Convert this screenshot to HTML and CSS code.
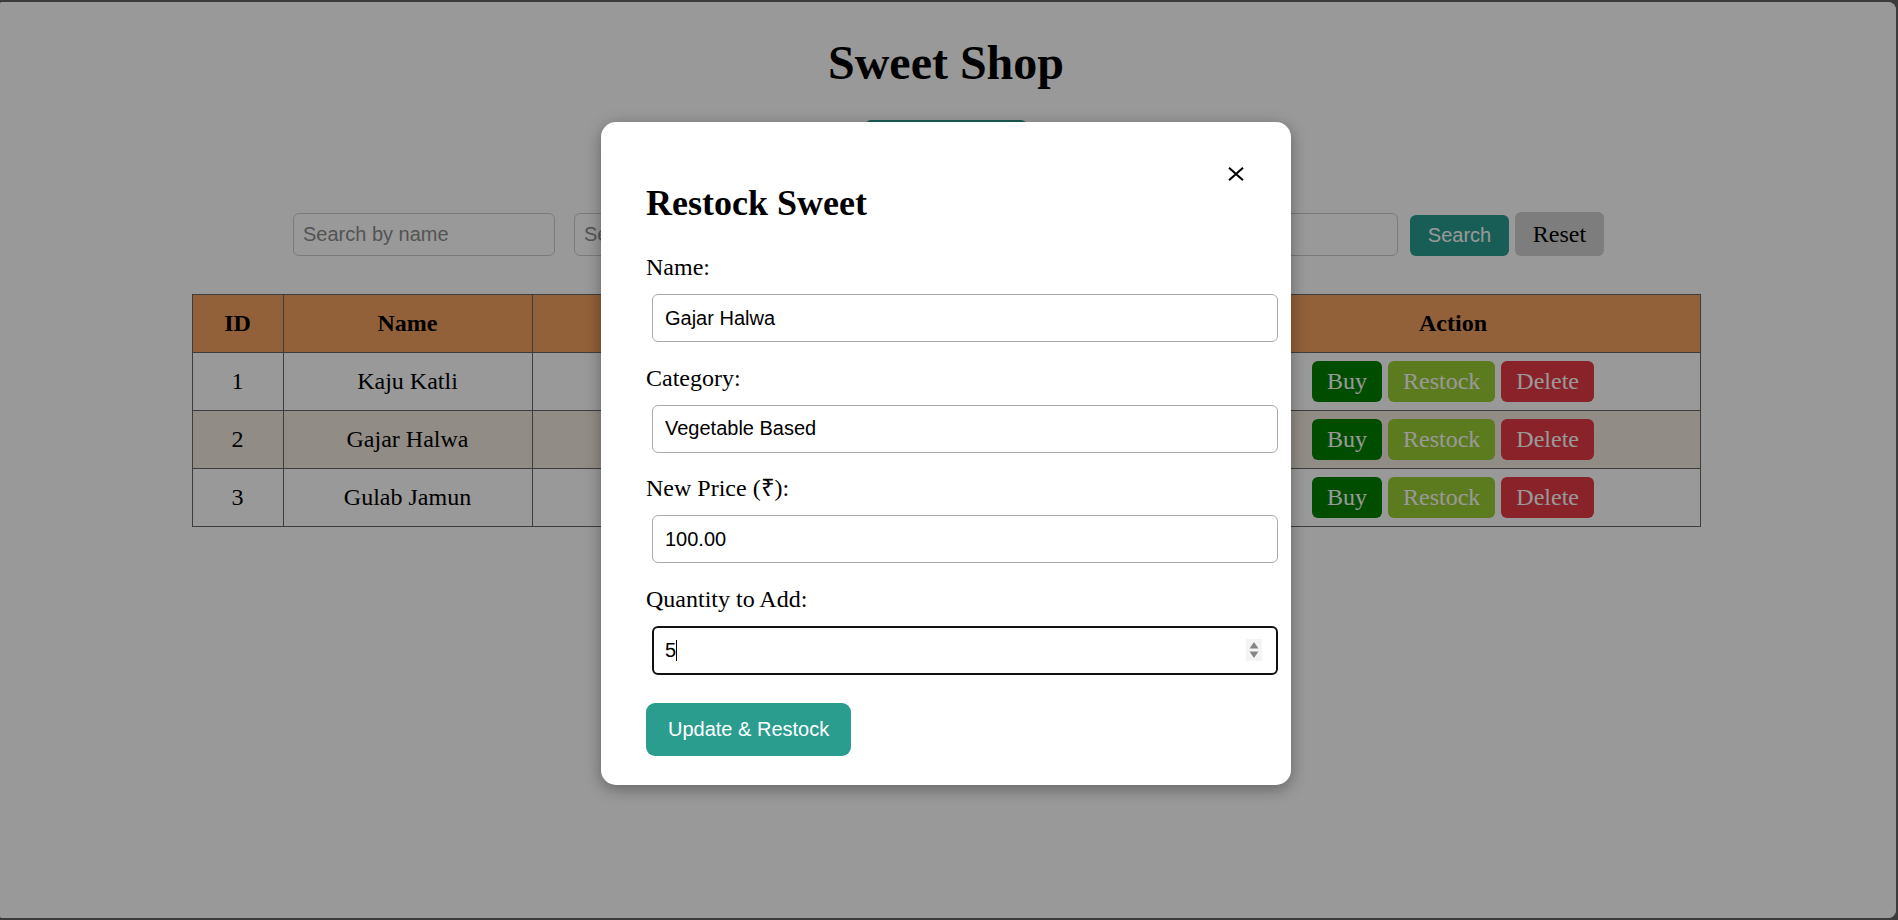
FILE: index.html
```html
<!DOCTYPE html>
<html lang="en">
<head>
<meta charset="utf-8">
<title>Sweet Shop</title>
<link rel="stylesheet" href="styles.css">
</head>
<body>
<div class="window">
  <main class="page">
    <h1 class="title">Sweet Shop</h1>
    <button type="button" class="btn-add"></button>
    <form class="search-row">
      <input class="search-input" type="text" placeholder="Search by name">
      <input class="search-input" type="text" placeholder="Search by category">
      <input class="search-input" type="text">
      <input class="search-input" type="text">
      <button type="button" class="btn-search">Search</button>
      <button type="button" class="btn-reset">Reset</button>
    </form>
    <table class="sweets">
      <colgroup>
        <col class="col-id">
        <col class="col-name">
        <col class="col-category">
        <col class="col-price">
        <col class="col-qty">
        <col class="col-action">
      </colgroup>
      <thead>
        <tr><th>ID</th><th>Name</th><th></th><th></th><th></th><th>Action</th></tr>
      </thead>
      <tbody>
        <tr>
          <td>1</td><td>Kaju Katli</td><td></td><td></td><td></td>
          <td><div class="action-group"><button type="button" class="btn-act btn-buy">Buy</button><button type="button" class="btn-act btn-restock">Restock</button><button type="button" class="btn-act btn-delete">Delete</button></div></td>
        </tr>
        <tr>
          <td>2</td><td>Gajar Halwa</td><td></td><td></td><td></td>
          <td><div class="action-group"><button type="button" class="btn-act btn-buy">Buy</button><button type="button" class="btn-act btn-restock">Restock</button><button type="button" class="btn-act btn-delete">Delete</button></div></td>
        </tr>
        <tr>
          <td>3</td><td>Gulab Jamun</td><td></td><td></td><td></td>
          <td><div class="action-group"><button type="button" class="btn-act btn-buy">Buy</button><button type="button" class="btn-act btn-restock">Restock</button><button type="button" class="btn-act btn-delete">Delete</button></div></td>
        </tr>
      </tbody>
    </table>
  </main>

  <div class="backdrop">
    <div class="modal">
      <button type="button" class="modal-close" aria-label="Close">
        <svg width="16" height="14" viewBox="0 0 16 14"><path d="M1 0.8 L15 13.2 M15 0.8 L1 13.2" stroke="#000" stroke-width="2.1" fill="none"/></svg>
      </button>
      <h2 class="modal-title">Restock Sweet</h2>
      <form class="modal-form">
        <div class="field">
          <label class="field-label">Name:</label>
          <input class="field-input" type="text" value="Gajar Halwa">
        </div>
        <div class="field">
          <label class="field-label">Category:</label>
          <input class="field-input" type="text" value="Vegetable Based">
        </div>
        <div class="field">
          <label class="field-label">New Price (₹):</label>
          <input class="field-input" type="text" value="100.00">
        </div>
        <div class="field">
          <label class="field-label">Quantity to Add:</label>
          <div class="qty-wrap">
            <input class="field-input qty-input" type="text" value="5">
            <span class="caret"></span>
            <svg class="spinner" width="16" height="22" viewBox="0 0 16 22"><rect width="16" height="22" fill="#f4f4f4"/><path d="M3.5 9.5 L8 3 L12.5 9.5 Z" fill="#858585"/><path d="M3.5 12.5 L8 19 L12.5 12.5 Z" fill="#858585"/></svg>
          </div>
        </div>
        <button type="button" class="btn-submit">Update &amp; Restock</button>
      </form>
    </div>
  </div>
</div>
</body>
</html>
```

FILE: styles.css
```css
* { box-sizing: border-box; }

html, body {
  margin: 0;
  height: 100%;
}

body {
  background: #3b3b3b;
  font-family: "Liberation Serif", "Times New Roman", serif;
  font-size: 24px;
  color: #000;
  overflow: hidden;
}

.window {
  position: relative;
  height: 916px;
  margin: 2px 2px 2px 0;
  background: #fff;
  border-radius: 2px 8px 8px 2px;
  overflow: hidden;
}

.page {
  padding: 34px 4px 0 0;
  display: flex;
  flex-direction: column;
  align-items: center;
}

.title {
  margin: 0;
  font-size: 48px;
  line-height: 54px;
  font-weight: bold;
}

.btn-add {
  margin-top: 30px;
  width: 162px;
  height: 41px;
  border: none;
  border-radius: 6px;
  background: #2a9d8f;
  color: #fff;
  font-family: "Liberation Sans", Arial, sans-serif;
  font-size: 20px;
}

.search-row {
  margin: 51px 0 0;
  padding-left: 5px;
  display: flex;
  align-items: flex-end;
}

.search-input {
  width: 262px;
  height: 43px;
  padding: 0 9px;
  border: 1px solid #ccc;
  border-radius: 6px;
  background: #fff;
  font-family: "Liberation Sans", Arial, sans-serif;
  font-size: 20px;
  color: #000;
}

.search-input::placeholder { color: #8c8c8c; }

.search-input + .search-input { margin-left: 19px; }

.btn-search {
  margin-left: 12px;
  width: 99px;
  height: 41px;
  padding: 0;
  border: none;
  border-radius: 6px;
  background: #2a9d8f;
  color: #fff;
  font-family: "Liberation Sans", Arial, sans-serif;
  font-size: 20px;
}

.btn-reset {
  margin-left: 6px;
  width: 89px;
  height: 44px;
  padding: 0;
  border: none;
  border-radius: 6px;
  background: #d0d0d0;
  color: #000;
  font-family: "Liberation Serif", "Times New Roman", serif;
  font-size: 24px;
}

.sweets {
  margin-top: 38px;
  width: 1508px;
  border-collapse: collapse;
  table-layout: fixed;
}

.col-id { width: 91px; }
.col-name { width: 249px; }
.col-category { width: 320px; }
.col-price { width: 177px; }
.col-qty { width: 177px; }
.col-action { width: 494px; }

.sweets th,
.sweets td {
  height: 58px;
  padding: 0;
  border: 1px solid #666;
  text-align: center;
  vertical-align: middle;
  font-size: 24px;
}

.sweets th {
  background: #f4a261;
  font-weight: bold;
}

.sweets tbody tr:nth-child(even) td { background: #f2e9df; }

.action-group {
  display: flex;
  justify-content: center;
  gap: 6px;
}

.btn-act {
  height: 41px;
  padding: 0 15px;
  border: none;
  border-radius: 6px;
  color: #fff;
  font-family: "Liberation Serif", "Times New Roman", serif;
  font-size: 24px;
}

.btn-buy { background: #008000; }
.btn-restock { background: #9acd32; }
.btn-delete { background: #e63946; }

/* Modal */
.backdrop {
  position: absolute;
  inset: 0;
  background: rgba(0, 0, 0, 0.4);
  display: flex;
  justify-content: center;
  align-items: flex-start;
  padding: 120px 4px 0 0;
}

.modal {
  position: relative;
  width: 690px;
  padding: 30px 45px 29px;
  background: #fff;
  border-radius: 15px;
  box-shadow: 0 4px 16px rgba(0, 0, 0, 0.35);
}

.modal-close {
  position: absolute;
  top: 45px;
  right: 47px;
  width: 16px;
  height: 14px;
  padding: 0;
  border: none;
  background: none;
  display: block;
}

.modal-close svg { display: block; }

.modal-title {
  margin: 30px 0 29px;
  font-size: 36px;
  line-height: 42px;
  font-weight: bold;
}

.modal-form {
  display: flex;
  flex-direction: column;
  align-items: flex-start;
}

.field {
  display: flex;
  flex-direction: column;
  align-items: flex-start;
  margin-bottom: 15.5px;
}

.field-label {
  display: block;
  font-size: 24px;
  line-height: 28px;
  margin-bottom: 7px;
}

.field-input {
  display: block;
  width: 626px;
  height: 48px;
  margin: 6px;
  padding: 0 12px;
  border: 1px solid #aaa;
  border-radius: 6px;
  background: #fff;
  font-family: "Liberation Sans", Arial, sans-serif;
  font-size: 20px;
  color: #000;
  outline: none;
}

.qty-wrap {
  position: relative;
  width: 626px;
  margin: 6px;
}

.qty-wrap .qty-input {
  margin: 0;
  height: 49px;
  border: 2px solid #111;
  padding: 0 11px;
}

.caret {
  position: absolute;
  left: 24px;
  top: 14px;
  width: 1px;
  height: 21px;
  background: #000;
}

.spinner {
  position: absolute;
  left: 594px;
  top: 13px;
}

.btn-submit {
  margin-top: 7px;
  height: 53px;
  padding: 0 22px;
  border: none;
  border-radius: 9px;
  background: #2a9d8f;
  color: #fff;
  font-family: "Liberation Sans", Arial, sans-serif;
  font-size: 20px;
}
```
